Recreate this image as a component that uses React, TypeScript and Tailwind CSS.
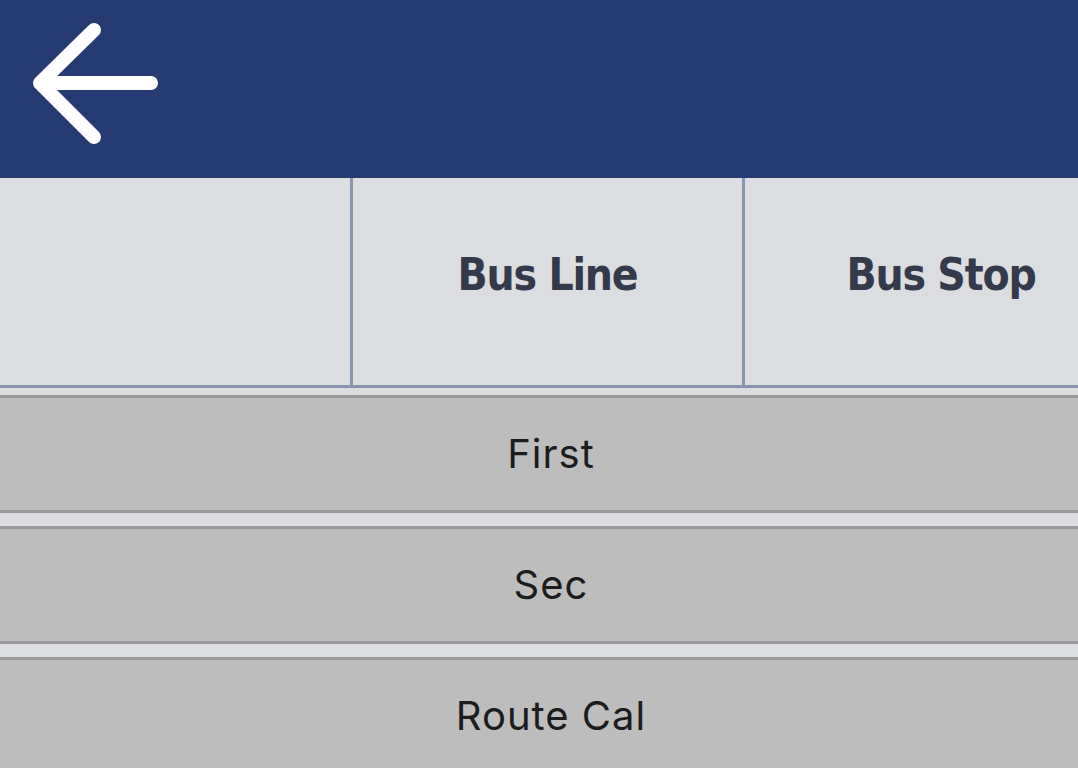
import { useState } from 'react'

const tabs = ['', 'Bus Line', 'Bus Stop']
const actions = ['First', 'Sec', 'Route Cal']

export default function App() {
  const [active, setActive] = useState<string | null>(null)

  return (
    <div className="min-h-screen bg-[#dcdde1] overflow-hidden">
      {/* HEADER */}
      <div className="h-[178px] bg-[#273b73] flex items-start">
        <button className="ml-[23px] mt-[13px] p-1" onClick={() => setActive(null)}>
          <svg width="136" height="136" viewBox="0 0 136 136" fill="none">
            <path d="M13 66 H124 M67 13 L13 66 L67 120" stroke="#ffffff" strokeWidth="14" strokeLinecap="round" strokeLinejoin="round" />
          </svg>
        </button>
      </div>

      {/* TABS */}
      <div className="flex h-[210px] border-b-[3px] border-[#8794ad] overflow-hidden">
        {tabs.map((t, i) => (
          <div
            key={i}
            className={
              i === 0
                ? 'w-[353px] shrink-0 border-r-[3px] border-[#8794ad]'
                : i === 1
                ? 'w-[392px] shrink-0 border-r-[3px] border-[#8794ad] flex items-center justify-center pb-[14px]'
                : 'w-[392px] shrink-0 flex items-center justify-center pb-[14px]'
            }
          >
            <span className="font-['DejaVu_Sans_Condensed','DejaVu_Sans',sans-serif] font-stretch-condensed font-bold text-[44px] tracking-[-1.2px] text-[#343a4b]">
              {t}
            </span>
          </div>
        ))}
      </div>

      {/* ACTIONS */}
      <div className="mt-[7px] flex flex-col gap-[13px]">
        {actions.map((a) => (
          <button
            key={a}
            onClick={() => setActive(a)}
            className={`h-[118px] w-full border-y-[3px] border-[#9a9a9a] pl-[24px] flex items-center justify-center font-['Inter',sans-serif] text-[40px] tracking-[1px] text-[#1c1c1c] ${active === a ? 'bg-[#b0b0b0]' : 'bg-[#bdbdbd]'}`}
          >
            {a}
          </button>
        ))}
      </div>
    </div>
  )
}
